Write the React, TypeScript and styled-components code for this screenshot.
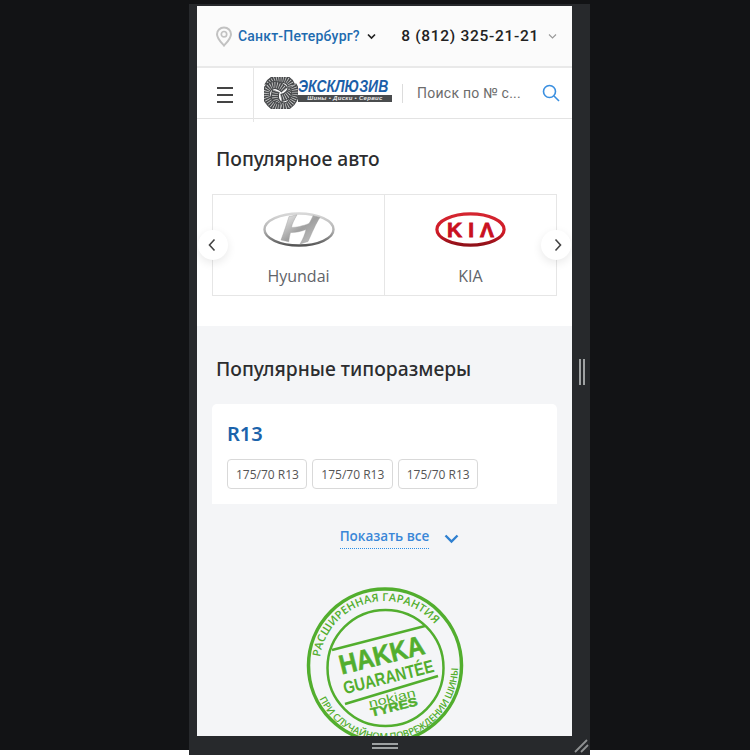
import React from "react";
import styled, { createGlobalStyle } from "styled-components";

const Global = createGlobalStyle`
  html, body { margin: 0; padding: 0; }
  body {
    font-family: "Open Sans", sans-serif;
    overflow: hidden;
    background: linear-gradient(#121315 750px, #fff 750px);
  }
  * { box-sizing: border-box; }
`;

const Page = styled.div`
  width: 750px;
  height: 755px;
  padding: 4px 0 0 189px;
  overflow: hidden;
`;
const Frame = styled.div`
  width: 401px;
  height: 751px;
  display: grid;
  grid-template-columns: 8px 375px 18px;
  grid-template-rows: 2px 730px 19px;
  background: #27292c;
`;
const Viewport = styled.div`
  grid-column: 2;
  grid-row: 2;
  background: #fff;
  overflow: hidden;
`;
const SideHandle = styled.div`
  grid-column: 3;
  grid-row: 2;
  display: flex;
  justify-content: center;
  align-items: center;
  gap: 2px;
  padding: 2px 0 0 2px;
  & > i { width: 2px; height: 26px; background: #9ea1a2; }
`;
const BottomBar = styled.div`
  grid-column: 2 / 4;
  grid-row: 3;
  position: relative;
  display: flex;
  justify-content: center;
  align-items: center;
`;
const BottomHandle = styled.div`
  width: 26px;
  height: 6px;
  border-top: 2px solid #9ea1a2;
  border-bottom: 2px solid #9ea1a2;
  margin-right: 18px;
`;
const Corner = styled.svg`
  position: absolute;
  right: 0;
  bottom: 2px;
`;

const TopBar = styled.div`
  height: 60px;
  background: #fbfbfb;
  display: flex;
  align-items: center;
  padding: 0 15px 0 18px;
`;
const CityLink = styled.span`
  margin-left: 5px;
  font-size: 14px;
  font-weight: 500;
  letter-spacing: 0.2px;
  color: #1e6bb0;
  font-family: Roboto, sans-serif;
`;
const Phone = styled.span`
  margin-left: auto;
  font-size: 15.500px;
  font-weight: 500;
  letter-spacing: 0.700px;
  color: #222;
  font-family: Roboto, sans-serif;
`;
const NavBar = styled.div`
  height: 53px;
  border-top: 2px solid #e9e9e9;
  border-bottom: 1px solid #e3e3e3;
  display: flex;
  align-items: center;
`;
const Burger = styled.div`
  width: 57px;
  height: 54px;
  align-self: flex-start;
  border-right: 1px solid #e6e6e6;
  display: flex;
  flex-direction: column;
  justify-content: center;
  gap: 5px;
  padding-left: 20px;
  & > i { width: 16px; height: 2px; background: #444; }
`;
const LogoBox = styled.div`
  width: 128px;
  margin-left: 10px;
  display: flex;
  flex-shrink: 0;
  & > svg { flex-shrink: 0; }
`;
const LogoText = styled.div`
  display: flex;
  flex-direction: column;
  width: 94px;
  padding-top: 2px;
`;
const LogoName = styled.div`
  font: italic 700 17px/15px "Liberation Sans", sans-serif;
  color: #1c5fa8;
  height: 15px;
  white-space: nowrap;
  transform: scaleX(0.82);
  transform-origin: left center;
`;
const LogoTag = styled.div`
  width: 94px;
  height: 7px;
  margin-top: 1px;
  background: #4a4c4e;
  color: #e8e8e8;
  font: italic 700 6px/7px "Liberation Sans", sans-serif;
  text-align: center;
  letter-spacing: 0.300px;
  white-space: nowrap;
`;
const Divider = styled.div`
  width: 1px;
  height: 19px;
  background: #dcdcdc;
  margin-left: 10px;
`;
const Search = styled.span`
  margin-left: 14px;
  font-size: 14px;
  letter-spacing: 0.250px;
  color: #6c6c6c;
  white-space: nowrap;
  font-family: Roboto, sans-serif;
`;
const SearchIcon = styled.svg`
  margin-left: auto;
  margin-right: 12px;
`;

const Section = styled.section<{ $grey?: boolean }>`
  background: ${(p) => (p.$grey ? "#f4f5f7" : "#fff")};
  padding: 0 15px;
`;
const Title = styled.h2`
  margin: 0;
  padding-left: 4px;
  font-family: "Noto Sans", sans-serif;
  font-size: 19.300px;
  line-height: 26px;
  font-weight: 500;
  color: #2c2d2f;
`;
const PopularAuto = styled(Section)`
  height: 207px;
  padding-top: 27px;
`;
const Carousel = styled.div`
  position: relative;
  margin-top: 22px;
  height: 102px;
  display: grid;
  grid-template-columns: 171px 1fr;
  border: 1px solid #e6e6e6;
`;
const Brand = styled.div`
  display: flex;
  flex-direction: column;
  align-items: center;
  padding-top: 17px;
  & + & { border-left: 1px solid #e6e6e6; }
`;
const BrandName = styled.div`
  margin-top: 19px;
  font-size: 16px;
  line-height: 20px;
  color: #5f6469;
`;
const Arrow = styled.div<{ $side: "left" | "right" }>`
  position: absolute;
  top: 35px;
  ${(p) => (p.$side === "left" ? "left: -15px; padding-right: 3px;" : "right: -15px; padding-left: 4px;")}
  width: 30px;
  height: 30px;
  border-radius: 50%;
  background: #fff;
  box-shadow: 0 3px 10px rgba(0, 0, 0, 0.09);
  display: flex;
  align-items: center;
  justify-content: center;
`;
const SizesSection = styled(Section)`
  height: 410px;
  padding-top: 30px;
`;
const SizeCard = styled.div`
  margin-top: 22px;
  height: 100px;
  background: #fff;
  border-radius: 5px 5px 0 0;
  padding: 17px 15px 0;
`;
const SizeHeading = styled.div`
  font-family: "Noto Sans", sans-serif;
  font-size: 20px;
  line-height: 26px;
  font-weight: 600;
  color: #1b63ab;
`;
const Chips = styled.div`
  display: flex;
  gap: 5px;
  margin-top: 12px;
`;
const Chip = styled.div`
  height: 30px;
  padding: 0 7.400px 0 8px;
  border: 1px solid #d9d9d9;
  border-radius: 4px;
  font-size: 12px;
  line-height: 29px;
  color: #555;
`;
const ShowAll = styled.div`
  display: flex;
  justify-content: center;
  align-items: center;
  margin-top: 20px;
  padding-left: 30px;
`;
const ShowAllLink = styled.span`
  font-size: 13.500px;
  line-height: 24px;
  font-weight: 600;
  color: #3a87d8;
  border-bottom: 1px dotted #2b8fe8;
`;
const ChevronDown = styled.svg`
  margin-left: 15px;
  margin-top: 4px;
`;
const Stamp = styled.svg`
  display: block;
  margin: 37px auto 0;
`;

const Pin = () => (
  <svg width="18" height="21" viewBox="0 0 18 21" fill="none">
    <path d="M9 1.500C5 1.500 2 4.500 2 8.200c0 4.300 4.600 8.600 7 11.400 2.400-2.800 7-7.100 7-11.400 0-3.700-3-6.700-7-6.700z" stroke="#c2c2c2" strokeWidth="2" />
    <circle cx="9" cy="8.200" r="2.700" stroke="#c2c2c2" strokeWidth="1.700" />
  </svg>
);

const Chevron = ({ color, width, ml }: { color: string; width: number; ml: number }) => (
  <svg width="9" height="7" viewBox="0 0 9 7" fill="none" style={{ marginLeft: ml }}>
    <path d="M1 1.500l3.500 3.500L8 1.500" stroke={color} strokeWidth={width} />
  </svg>
);

const band = "M4 9C8 0 24 -1 27 8C29 15 23 20 17 21";

const TyreLogo = () => (
  <svg width="34" height="32" viewBox="0 0 34 32" fill="none">
    {[0, 120, 240].map((a) => (
      <g key={a} transform={`rotate(${a} 16.500 16)`}>
        <path d={band} stroke="#47494b" strokeWidth="8" />
        <path d={band} stroke="#d5d5d5" strokeWidth="6" strokeDasharray="0.700 1.500" />
      </g>
    ))}
  </svg>
);

const HyundaiLogo = () => (
  <svg width="72" height="35" viewBox="0 0 72 35" fill="none">
    <defs>
      <linearGradient id="hyRing" x1="0" y1="0" x2="0" y2="1">
        <stop offset="0" stopColor="#d8d8d8" />
        <stop offset="0.550" stopColor="#b0b0b0" />
        <stop offset="1" stopColor="#555" />
      </linearGradient>
      <linearGradient id="hy" x1="0" y1="0" x2="1" y2="1">
        <stop offset="0" stopColor="#f0f0f0" />
        <stop offset="0.500" stopColor="#a0a0a0" />
        <stop offset="1" stopColor="#c8c8c8" />
      </linearGradient>
    </defs>
    <ellipse cx="36" cy="17.500" rx="34.500" ry="16" fill="#fff" stroke="url(#hyRing)" strokeWidth="2.400" />
    <path d="M26 4.500L34 2.800C31 8 29 12 28.500 15.500C33 15.500 40 14 46 11.500C48 8.500 49 6 50 3.800L57 5.500C53 11 49 21 45 29.500L37 32C40 27 42 22 43 17.500C38 19.500 31 21 27.500 20.500C26.500 24 26 27 25.800 29.800L18 28C21 20 24 11 26 4.500Z" fill="url(#hy)" stroke="#9a9a9a" strokeWidth="0.400" />
  </svg>
);

const KiaLogo = () => (
  <svg width="71" height="35" viewBox="0 0 71 35" fill="none">
    <defs>
      <linearGradient id="kiaRing" x1="0" y1="0" x2="0" y2="1">
        <stop offset="0" stopColor="#d42530" />
        <stop offset="0.600" stopColor="#cf1a26" />
        <stop offset="1" stopColor="#8f1018" />
      </linearGradient>
    </defs>
    <ellipse cx="35.500" cy="17.500" rx="33.600" ry="15.600" fill="#fff" stroke="url(#kiaRing)" strokeWidth="3.200" />
    <text x="35.500" y="25" textAnchor="middle" fontFamily="Liberation Sans, sans-serif" fontWeight="700" fontSize="21" textLength="47" lengthAdjust="spacing" stroke="#c9101f" strokeWidth="0.800" fill="#c9101f">KIΛ</text>
  </svg>
);

const HakkaStamp = () => (
  <Stamp width="160" height="160" viewBox="0 0 160 160" fill="none">
    <defs>
      <path id="stampTop" d="M15 71A65.500 65.500 0 0 1 132 41" />
      <path id="stampBottom" d="M14.400 112.800A73 73 0 0 0 153 78" />
    </defs>
    <g stroke="#52ae2e">
      <circle cx="80" cy="79.500" r="76.500" strokeWidth="3.500" />
      <circle cx="80.500" cy="82" r="58" strokeWidth="2.500" />
      <path d="M27 64L120 40" strokeWidth="2.500" />
      <path d="M40 118L133 90" strokeWidth="2.500" />
    </g>
    <g fill="#52ae2e" fontFamily="Open Sans, sans-serif">
      <text fontSize="11" fontWeight="600" textLength="150">
        <textPath href="#stampTop" textLength="150">РАСШИРЕННАЯ ГАРАНТИЯ</textPath>
      </text>
      <text fontSize="9.500" fontWeight="600" textLength="195">
        <textPath href="#stampBottom" textLength="195">ПРИ СЛУЧАЙНОМ ПОВРЕЖДЕНИИ ШИНЫ</textPath>
      </text>
      <g textAnchor="middle" fontFamily="Liberation Sans, sans-serif">
        <text x="79" y="78" fontSize="27" fontWeight="700" textLength="87" lengthAdjust="spacingAndGlyphs" stroke="#52ae2e" strokeWidth="0.600" transform="rotate(-14 79 78)">HAKKA</text>
        <text x="85" y="97" fontSize="18" fontWeight="700" textLength="93" lengthAdjust="spacingAndGlyphs" transform="rotate(-14 85 97)">GUARANTÉE</text>
        <text x="88" y="116" fontSize="12" fontWeight="400" textLength="48" lengthAdjust="spacingAndGlyphs" transform="rotate(-14 88 116)">nokian</text>
        <text x="90" y="125" fontSize="12" fontWeight="700" textLength="48" lengthAdjust="spacingAndGlyphs" stroke="#52ae2e" strokeWidth="0.500" transform="rotate(-14 90 125)">TYRES</text>
      </g>
    </g>
  </Stamp>
);

const sizes = ["175/70 R13", "175/70 R13", "175/70 R13"];

export default function App() {
  return (
    <Page>
      <Global />
      <Frame>
        <Viewport>
          <TopBar>
            <Pin />
            <CityLink>Санкт-Петербург?</CityLink>
            <Chevron color="#222" width={1.700} ml={7} />
            <Phone>8 (812) 325-21-21</Phone>
            <Chevron color="#999" width={1.100} ml={9} />
          </TopBar>
          <NavBar>
            <Burger>
              <i />
              <i />
              <i />
            </Burger>
            <LogoBox>
              <TyreLogo />
              <LogoText>
                <LogoName>ЭКСКЛЮЗИВ</LogoName>
                <LogoTag>Шины • Диски • Сервис</LogoTag>
              </LogoText>
            </LogoBox>
            <Divider />
            <Search>Поиск по № с...</Search>
            <SearchIcon width="18" height="18" viewBox="0 0 18 18" fill="none">
              <circle cx="7.500" cy="7.500" r="6" stroke="#3a8fe0" strokeWidth="1.600" />
              <path d="M12 12l5 5" stroke="#3a8fe0" strokeWidth="1.600" />
            </SearchIcon>
          </NavBar>
          <PopularAuto>
            <Title>Популярное авто</Title>
            <Carousel>
              <Brand>
                <HyundaiLogo />
                <BrandName>Hyundai</BrandName>
              </Brand>
              <Brand>
                <KiaLogo />
                <BrandName>KIA</BrandName>
              </Brand>
              <Arrow $side="left">
                <svg width="10" height="14" viewBox="0 0 10 14" fill="none">
                  <path d="M7.500 1.500L2.500 7l5 5.500" stroke="#444" strokeWidth="1.600" />
                </svg>
              </Arrow>
              <Arrow $side="right">
                <svg width="10" height="14" viewBox="0 0 10 14" fill="none">
                  <path d="M2.500 1.500L7.500 7l-5 5.500" stroke="#444" strokeWidth="1.600" />
                </svg>
              </Arrow>
            </Carousel>
          </PopularAuto>
          <SizesSection $grey>
            <Title>Популярные типоразмеры</Title>
            <SizeCard>
              <SizeHeading>R13</SizeHeading>
              <Chips>
                {sizes.map((s, i) => (
                  <Chip key={i}>{s}</Chip>
                ))}
              </Chips>
            </SizeCard>
            <ShowAll>
              <ShowAllLink>Показать все</ShowAllLink>
              <ChevronDown width="15" height="10" viewBox="0 0 15 10" fill="none">
                <path d="M1.500 1.500l6 6 6-6" stroke="#2f80d0" strokeWidth="2.400" />
              </ChevronDown>
            </ShowAll>
            <HakkaStamp />
          </SizesSection>
        </Viewport>
        <SideHandle>
          <i />
          <i />
        </SideHandle>
        <BottomBar>
          <BottomHandle />
          <Corner width="16" height="14" viewBox="0 0 16 14" fill="none">
            <path d="M1 13L13 1M7 13l7-7" stroke="#8f9192" strokeWidth="1.800" />
          </Corner>
        </BottomBar>
      </Frame>
    </Page>
  );
}
